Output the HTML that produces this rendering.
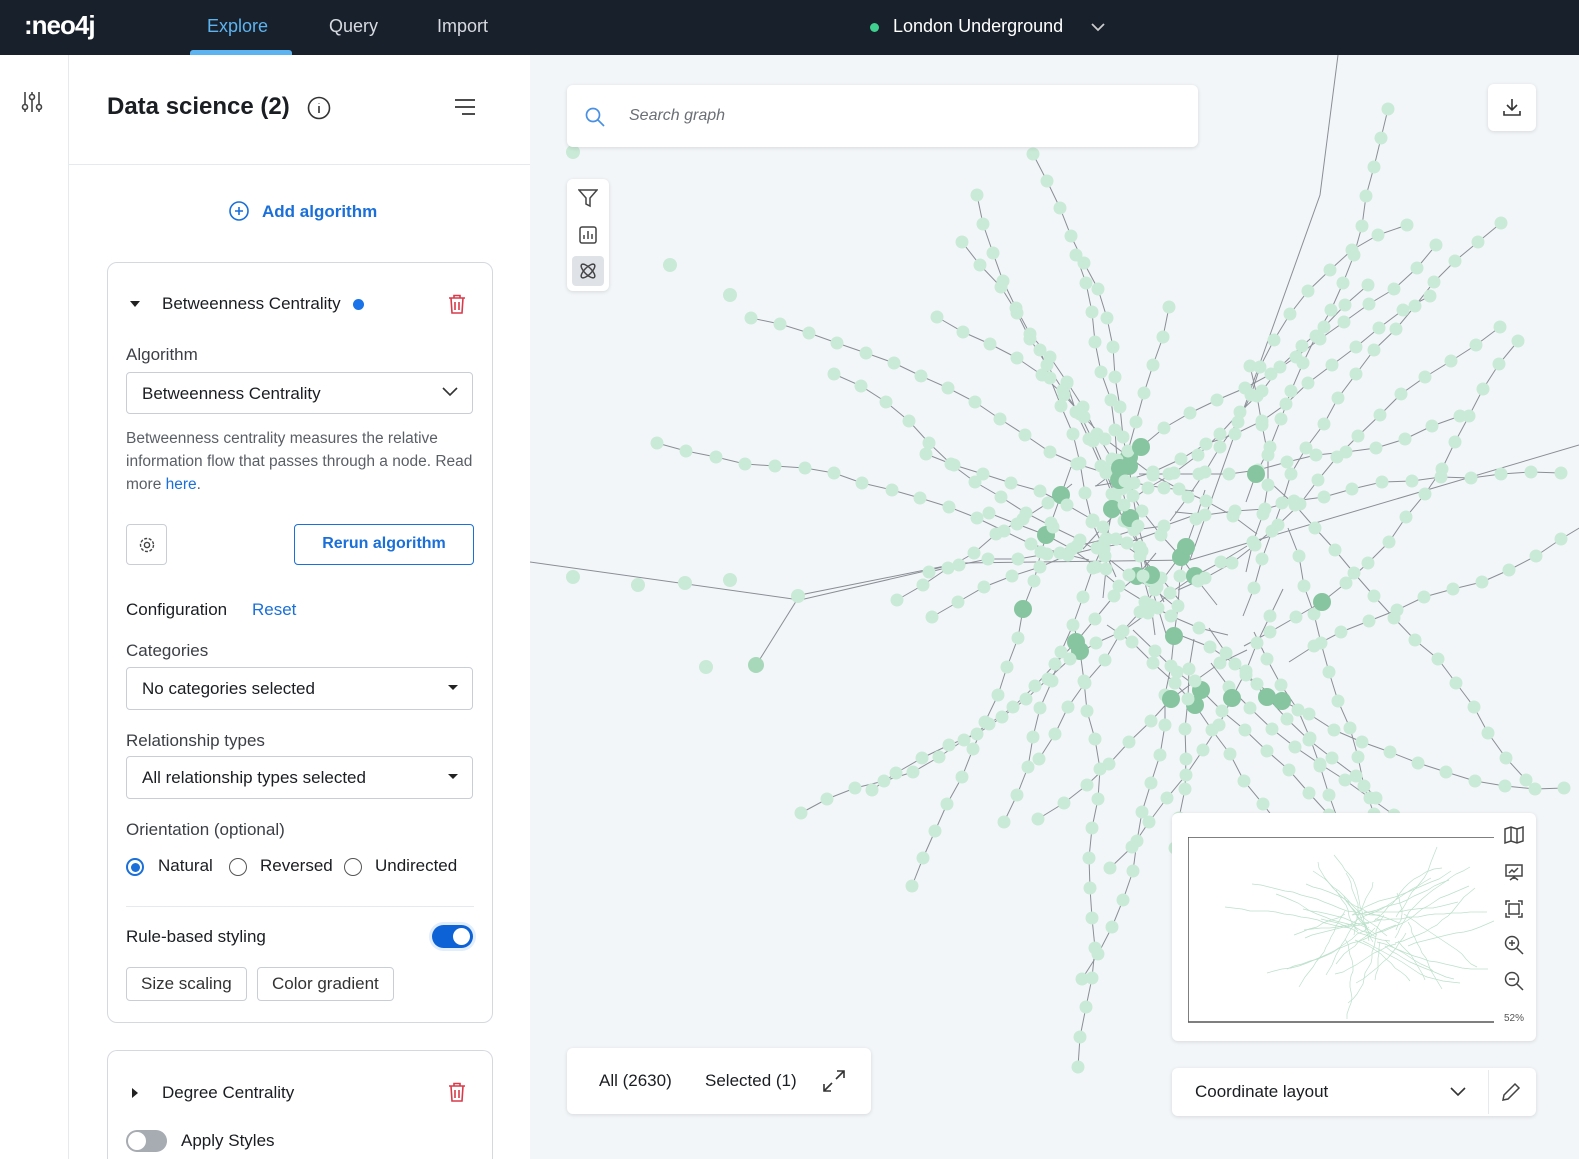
<!DOCTYPE html>
<html><head><meta charset="utf-8"><style>
*{box-sizing:border-box;margin:0;padding:0}
html,body{width:1579px;height:1159px;overflow:hidden}
body{font-family:"Liberation Sans",sans-serif;background:#f3f6f9;position:relative;color:#1a1d21}
.top{position:absolute;left:0;top:0;width:1579px;height:55px;background:#18202b;color:#fff}
.top .logo{position:absolute;left:24px;top:10px;font-size:26px;font-weight:bold;letter-spacing:-1px}
.tab{position:absolute;top:16px;font-size:18px;color:#d7dbe0}
.side{position:absolute;left:0;top:55px;width:69px;height:1104px;background:#fff;border-right:1px solid #e6e9ee}
.panel{position:absolute;left:69px;top:55px;width:461px;height:1104px;background:#fff;overflow:hidden}
.card{position:absolute;left:38px;width:386px;border:1.5px solid #d5d9de;border-radius:10px;background:#fff}
.abs{position:absolute}
.lbl{font-size:16px;color:#3c4046}
.sel{position:absolute;left:18px;width:347px;height:42px;border:1.5px solid #c9ced4;border-radius:4px;font-size:16px;padding:11px 15px}
.rad{position:absolute;width:18px;height:18px;border:1.5px solid #555;border-radius:50%}
.btn{position:absolute;border:1.5px solid #c9ced4;border-radius:4px;font-size:16px;color:#333;padding:6px 14px}
.white{background:#fff;position:absolute;border-radius:6px;box-shadow:0 1px 4px rgba(0,0,0,.12)}
.t17{font-size:17px}
</style></head><body>
<div class="top">
<div class="logo">:neo4j</div>
<div class="tab" style="left:207px;color:#5db3f0">Explore</div>
<div class="abs" style="left:190px;top:50px;width:102px;height:5px;background:#5db3f0;border-radius:3px 3px 0 0"></div>
<div class="tab" style="left:329px">Query</div>
<div class="tab" style="left:437px">Import</div>
<div class="abs" style="left:870px;top:23px;width:9px;height:9px;border-radius:50%;background:#3fcf8e"></div>
<div class="tab" style="left:893px;color:#fff">London Underground</div>
<svg class="abs" style="left:1090px;top:20px" width="16" height="14"><path d="M2 4l6 6 6-6" stroke="#ccc" stroke-width="1.8" fill="none"/></svg>
</div>
<div class="side"><svg class="abs" style="left:21px;top:35px" width="22" height="24" fill="none" stroke="#444" stroke-width="1.6"><path d="M4 2v20M11 2v20M18 2v20"/><circle cx="4" cy="17" r="2.5" fill="#fff"/><circle cx="11" cy="7" r="2.5" fill="#fff"/><circle cx="18" cy="17" r="2.5" fill="#fff"/></svg></div>
<div class="panel">
<div class="abs" style="left:38px;top:38px;font-size:24px;font-weight:bold">Data science (2)</div>
<svg class="abs" style="left:238px;top:41px" width="24" height="24" fill="none" stroke="#333" stroke-width="1.6"><circle cx="12" cy="12" r="10.5"/><path d="M12 10v7M12 7v.5"/></svg>
<svg class="abs" style="left:385px;top:43px" width="22" height="18" stroke="#333" stroke-width="1.8"><path d="M1 2h20M1 9h20M8 16h13"/></svg>
<div class="abs" style="left:0;top:109px;width:461px;height:1px;background:#e6e9ee"></div>
<svg class="abs" style="left:160px;top:146px" width="20" height="20" fill="none" stroke="#1a6fd8" stroke-width="1.6"><circle cx="10" cy="10" r="9"/><path d="M10 6v8M6 10h8"/></svg>
<div class="abs" style="left:193px;top:147px;font-size:17px;font-weight:bold;color:#1a6fd8">Add algorithm</div>
<div class="card" style="top:207px;height:761px">
<svg class="abs" style="left:22px;top:37px" width="10" height="8"><path d="M0 1h10L5 7z" fill="#222"/></svg>
<div class="abs t17" style="left:54px;top:31px">Betweenness Centrality</div>
<div class="abs" style="left:245px;top:36px;width:11px;height:11px;border-radius:50%;background:#1a73e8"></div>
<svg class="abs" style="left:340px;top:31px" width="18" height="20" fill="none" stroke="#d93a4a" stroke-width="1.6"><path d="M1 4h16M6 4V1.5h6V4M3 4l1 15h10l1-15M7 8v8M11 8v8"/></svg>
<div class="abs lbl t17" style="left:18px;top:82px">Algorithm</div>
<div class="sel t17" style="top:109px">Betweenness Centrality<svg class="abs" style="right:14px;top:14px" width="16" height="10"><path d="M1 1l7 7 7-7" stroke="#333" stroke-width="1.6" fill="none"/></svg></div>
<div class="abs" style="left:18px;top:164px;width:350px;font-size:15.5px;line-height:23px;color:#5a5f66">Betweenness centrality measures the relative information flow that passes through a node. Read more <span style="color:#1a6fd8">here</span>.</div>
<div class="abs" style="left:18px;top:261px;width:41px;height:41px;border:1.5px solid #c9ced4;border-radius:4px"><svg class="abs" style="left:11px;top:11px" width="18" height="18" fill="none" stroke="#444" stroke-width="1.4"><circle cx="9" cy="9" r="2.6"/><circle cx="9" cy="9" r="6.5" stroke-dasharray="3 1.6"/></svg></div>
<div class="abs" style="left:186px;top:261px;width:180px;height:41px;border:1.5px solid #1a6fd8;border-radius:4px;color:#1a6fd8;font-size:16px;font-weight:bold;text-align:center;line-height:38px">Rerun algorithm</div>
<div class="abs t17" style="left:18px;top:337px">Configuration</div>
<div class="abs t17" style="left:144px;top:337px;color:#1a6fd8">Reset</div>
<div class="abs lbl t17" style="left:18px;top:378px">Categories</div>
<div class="sel t17" style="top:404px;height:43px">No categories selected<svg class="abs" style="right:14px;top:17px" width="10" height="6"><path d="M0 0h10L5 5z" fill="#222"/></svg></div>
<div class="abs lbl t17" style="left:18px;top:468px">Relationship types</div>
<div class="sel t17" style="top:493px;height:43px">All relationship types selected<svg class="abs" style="right:14px;top:17px" width="10" height="6"><path d="M0 0h10L5 5z" fill="#222"/></svg></div>
<div class="abs lbl t17" style="left:18px;top:557px">Orientation (optional)</div>
<div class="rad" style="left:18px;top:595px;border:2px solid #1a6fd8"><div class="abs" style="left:3px;top:3px;width:9px;height:9px;border-radius:50%;background:#1a6fd8"></div></div>
<div class="abs t17" style="left:50px;top:593px">Natural</div>
<div class="rad" style="left:121px;top:595px"></div>
<div class="abs t17" style="left:152px;top:593px">Reversed</div>
<div class="rad" style="left:236px;top:595px"></div>
<div class="abs t17" style="left:267px;top:593px">Undirected</div>
<div class="abs" style="left:18px;top:643px;width:348px;height:1px;background:#e6e9ee"></div>
<div class="abs t17" style="left:18px;top:664px">Rule-based styling</div>
<div class="abs" style="left:324px;top:662px;width:41px;height:23px;border-radius:12px;background:#0d62d6;box-shadow:0 0 0 3px #e3eefc"><div class="abs" style="right:3px;top:3px;width:17px;height:17px;border-radius:50%;background:#fff"></div></div>
<div class="btn t17" style="left:18px;top:704px">Size scaling</div>
<div class="btn t17" style="left:149px;top:704px">Color gradient</div>
</div>
<div class="card" style="top:995px;height:140px;border-bottom:none;border-radius:10px 10px 0 0">
<svg class="abs" style="left:24px;top:37px" width="6" height="10"><path d="M0 0l6 5-6 5z" fill="#222"/></svg>
<div class="abs t17" style="left:54px;top:32px">Degree Centrality</div>
<svg class="abs" style="left:340px;top:31px" width="18" height="20" fill="none" stroke="#d93a4a" stroke-width="1.6"><path d="M1 4h16M6 4V1.5h6V4M3 4l1 15h10l1-15M7 8v8M11 8v8"/></svg>
<div class="abs" style="left:18px;top:79px;width:41px;height:22px;border-radius:11px;background:#a7acb2"><div class="abs" style="left:2px;top:2px;width:18px;height:18px;border-radius:50%;background:#fff"></div></div>
<div class="abs t17" style="left:73px;top:80px">Apply Styles</div>
</div>
</div>
<svg id="g" class="abs" style="left:530px;top:55px" width="1049" height="1104"></svg>
<div class="white" style="left:567px;top:85px;width:631px;height:62px"><svg class="abs" style="left:18px;top:22px" width="20" height="20" fill="none" stroke="#4a90e2" stroke-width="1.7"><circle cx="8" cy="8" r="6.5"/><path d="M13 13l6 6"/></svg><div class="abs" style="left:62px;top:22px;font-size:16px;font-style:italic;color:#6a6f76">Search graph</div></div>
<div class="white" style="left:567px;top:179px;width:42px;height:112px">
<svg class="abs" style="left:11px;top:9px" width="20" height="20" fill="none" stroke="#444" stroke-width="1.5"><path d="M1 2h18l-7 8v8l-4-2v-6z"/></svg>
<svg class="abs" style="left:12px;top:47px" width="18" height="18" fill="none" stroke="#444" stroke-width="1.5"><rect x="1" y="1" width="16" height="16" rx="2"/><path d="M5 13V9M9 13V5M13 13V8"/></svg>
<div class="abs" style="left:5px;top:77px;width:32px;height:30px;border-radius:4px;background:#dfe3e8"></div>
<svg class="abs" style="left:11px;top:82px" width="20" height="20" fill="none" stroke="#444" stroke-width="1.5"><ellipse cx="10" cy="10" rx="9" ry="3.5" transform="rotate(45 10 10)"/><ellipse cx="10" cy="10" rx="9" ry="3.5" transform="rotate(-45 10 10)"/></svg>
</div>
<div class="white" style="left:1488px;top:84px;width:48px;height:47px"><svg class="abs" style="left:15px;top:14px" width="18" height="18" fill="none" stroke="#333" stroke-width="1.6"><path d="M9 1v11M4 7l5 5 5-5M1 13v4h16v-4"/></svg></div>
<div class="white" style="left:1172px;top:813px;width:364px;height:228px">
<svg class="abs" style="left:16px;top:24px" width="306" height="186"><path d="M0 0h306M0 0v185h306" stroke="#555" stroke-width="1.5" fill="none"/><g stroke="#9fd3b5" stroke-width=".7" fill="none" opacity=".7" id="mini"></g></svg>
<svg class="abs" style="left:332px;top:12px" width="20" height="200" fill="none" stroke="#444" stroke-width="1.5">
<path d="M1 4l6-2 6 2 6-2v14l-6 2-6-2-6 2zM7 2v14M13 4v14"/>
<path d="M2 40h16v11H2zM10 51v3M6 55l4-3 4 3M5 48l3-3 2 2 4-4"/>
<path d="M2 80v-4h4M14 76h4v4M18 88v4h-4M6 92H2v-4M5 79h10v10H5z"/>
<circle cx="8" cy="118" r="6.5"/><path d="M13 123l6 6M8 115v6M5 118h6"/>
<circle cx="8" cy="154" r="6.5"/><path d="M13 159l6 6M5 154h6"/>
</svg>
<div class="abs" style="left:332px;top:200px;font-size:10px;color:#555">52%</div>
</div>
<div class="white" style="left:1172px;top:1068px;width:364px;height:48px"><div class="abs" style="left:23px;top:14px;font-size:17px">Coordinate layout</div><svg class="abs" style="left:278px;top:19px" width="16" height="10"><path d="M1 1l7 7 7-7" stroke="#333" stroke-width="1.6" fill="none"/></svg><div class="abs" style="left:316px;top:2px;width:1px;height:44px;background:#e6e9ee"></div><svg class="abs" style="left:329px;top:14px" width="20" height="20" fill="none" stroke="#444" stroke-width="1.5"><path d="M2 18l1-5L14 2l4 4L7 17z"/></svg></div>
<div class="white" style="left:567px;top:1048px;width:304px;height:66px"><div class="abs" style="left:32px;top:23px;font-size:17px">All (2630)</div><div class="abs" style="left:138px;top:23px;font-size:17px">Selected (1)</div><svg class="abs" style="left:255px;top:21px" width="24" height="24" fill="none" stroke="#333" stroke-width="1.6"><path d="M2 22l8-8M2 15v7h7M22 2l-8 8M15 2h7v7"/></svg></div>
<script>
var s=11;function r(){s=(s*16807)%2147483647;return s/2147483647}
var g=document.getElementById('g'),L='',N='',M='';
var cx=650,cy=510;
for(var b=0;b<46;b++){var a=b/46*6.283+(r()-.5)*.3,len=180+r()*330,x=cx+(r()-.5)*220,y=cy+(r()-.5)*200,d='M'+x.toFixed(0)+' '+y.toFixed(0),md='M'+(x*0.29).toFixed(0)+' '+(y*0.18).toFixed(0);
var steps=len/30;for(var i=0;i<steps;i++){a+=(r()-.5)*.4;x+=Math.cos(a)*30;y+=Math.sin(a)*30;d+='L'+x.toFixed(0)+' '+y.toFixed(0);md+='L'+(x*0.29).toFixed(0)+' '+(y*0.18).toFixed(0);
var dist=Math.hypot(x-cx,y-cy),dk=dist<170&&r()<.12;N+='<circle cx="'+x.toFixed(0)+'" cy="'+y.toFixed(0)+'" r="'+(dk?9:6.5)+'" fill="'+(dk?'#86c59f':'#c9ead6')+'"/>'}
L+='<path d="'+d+'"/>';M+='<path d="'+md+'"/>'}
L+='<path d="M0 507L270 545L430 508L660 505L1049 390"/><path d="M225 612L270 540L430 508M808 0L790 140L740 280L660 505"/>';
N+='<circle cx="43" cy="97" r="7" fill="#c9ead6"/><circle cx="140" cy="210" r="7" fill="#c9ead6"/><circle cx="200" cy="240" r="7" fill="#c9ead6"/><circle cx="43" cy="522" r="7" fill="#c9ead6"/><circle cx="108" cy="530" r="7" fill="#c9ead6"/><circle cx="155" cy="528" r="7" fill="#c9ead6"/><circle cx="200" cy="525" r="7" fill="#c9ead6"/><circle cx="268" cy="541" r="7" fill="#c9ead6"/><circle cx="176" cy="612" r="7" fill="#c9ead6"/><circle cx="226" cy="610" r="8" fill="#a8d8ba"/>';
g.innerHTML='<g stroke="#8a8f96" stroke-width="1" fill="none">'+L+'</g>'+N;
document.getElementById('mini').innerHTML=M;
</script>
</body></html>
